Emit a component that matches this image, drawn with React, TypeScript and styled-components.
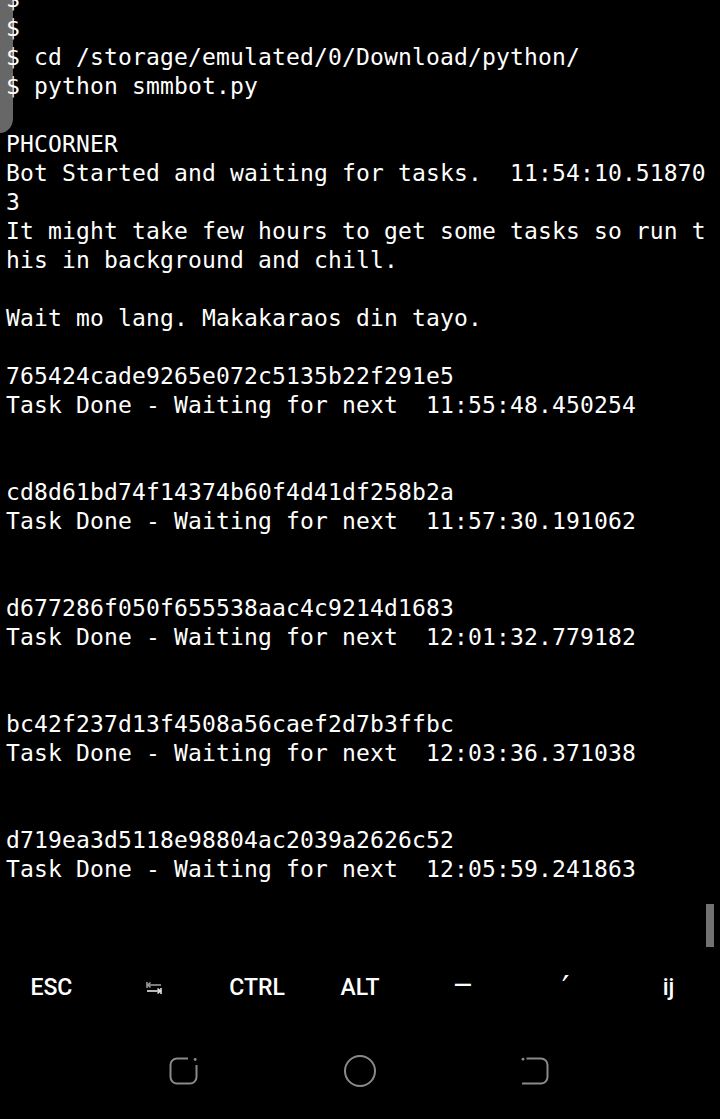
import React from "react";
import styled, { createGlobalStyle } from "styled-components";

const Global = createGlobalStyle`
  html, body { margin: 0; padding: 0; background: #000; }
  body { width: 720px; height: 1119px; overflow: hidden; }
`;

const Screen = styled.div`
  width: 720px;
  height: 1119px;
  background: #000;
  display: flex;
  flex-direction: column;
  overflow: hidden;
`;

const Terminal = styled.div`
  position: relative;
  height: 955px;
  overflow: hidden;
  flex: none;
`;

const Output = styled.pre`
  position: relative;
  margin: -15px 0 0 0;
  padding: 0 0 0 6px;
  font-family: "DejaVu Sans Mono", "Liberation Mono", monospace;
  font-size: 23px;
  line-height: 29px;
  letter-spacing: 0.15px;
  color: #ffffff;
  white-space: pre;
`;

const Line = styled.div`
  height: 29px;
`;

const DrawerHandle = styled.div`
  position: absolute;
  left: 0;
  top: 0;
  width: 13px;
  height: 133px;
  background: #676767;
  border-bottom-right-radius: 16px 18px;
`;

const ScrollThumb = styled.div`
  position: absolute;
  left: 706px;
  top: 904px;
  width: 8px;
  height: 43px;
  background: #727272;
`;

const ExtraKeys = styled.div`
  height: 64px;
  flex: none;
  display: grid;
  grid-template-columns: repeat(7, 1fr);
  align-items: center;
  justify-items: center;
`;

const Key = styled.div<{ $font?: string; $size?: number; $shift?: number; $weight?: number }>`
  font-family: ${(p) => p.$font ?? "Roboto"}, "DejaVu Sans", sans-serif;
  font-weight: ${(p) => p.$weight ?? 500};
  font-size: ${(p) => p.$size ?? 23}px;
  line-height: 1;
  color: #ffffff;
  transform: translateY(${(p) => p.$shift ?? 0}px);
`;

const NavBar = styled.div`
  flex: 1;
  display: flex;
  justify-content: center;
  align-items: center;
  padding-top: 4px;
`;

const NavSlot = styled.div`
  width: 176px;
  display: flex;
  justify-content: center;
`;

const lines = [
  "$",
  "$",
  "$ cd /storage/emulated/0/Download/python/",
  "$ python smmbot.py",
  "",
  "PHCORNER",
  "Bot Started and waiting for tasks.  11:54:10.51870",
  "3",
  "It might take few hours to get some tasks so run t",
  "his in background and chill.",
  "",
  "Wait mo lang. Makakaraos din tayo.",
  "",
  "765424cade9265e072c5135b22f291e5",
  "Task Done - Waiting for next  11:55:48.450254",
  "",
  "",
  "cd8d61bd74f14374b60f4d41df258b2a",
  "Task Done - Waiting for next  11:57:30.191062",
  "",
  "",
  "d677286f050f655538aac4c9214d1683",
  "Task Done - Waiting for next  12:01:32.779182",
  "",
  "",
  "bc42f237d13f4508a56caef2d7b3ffbc",
  "Task Done - Waiting for next  12:03:36.371038",
  "",
  "",
  "d719ea3d5118e98804ac2039a2626c52",
  "Task Done - Waiting for next  12:05:59.241863",
];

const TabIcon = () => (
  <svg width="18" height="14" viewBox="0 0 18 14">
    <g fill="none" strokeWidth="1.6">
      <line x1="2" y1="1" x2="2" y2="7" stroke="#9a9a9a" />
      <line x1="2.5" y1="4" x2="16" y2="4" stroke="#9a9a9a" />
      <polyline points="5.5,1.5 2.8,4 5.5,6.5" stroke="#9a9a9a" />
      <line x1="16" y1="7" x2="16" y2="13" stroke="#e6e6e6" />
      <line x1="2" y1="10" x2="15.5" y2="10" stroke="#e6e6e6" />
      <polyline points="12.5,7.5 15.2,10 12.5,12.5" stroke="#e6e6e6" />
    </g>
  </svg>
);

const RecentsIcon = () => (
  <svg width="32" height="30" viewBox="0 0 32 30">
    <path
      d="M20 2.5 H9 A6.5 6.5 0 0 0 2.5 9 V21 A6.5 6.5 0 0 0 9 27.5 H22 A6.5 6.5 0 0 0 28.5 21 V9"
      fill="none"
      stroke="#8a8a8a"
      strokeWidth="2"
    />
    <circle cx="27.2" cy="3.5" r="1.4" fill="#8a8a8a" />
  </svg>
);

const HomeIcon = () => (
  <svg width="34" height="34" viewBox="0 0 34 34">
    <circle cx="17" cy="17" r="15" fill="none" stroke="#8a8a8a" strokeWidth="2" />
  </svg>
);

const BackIcon = () => (
  <svg width="30" height="30" viewBox="0 0 30 30">
    <path
      d="M5.5 2.5 H20 A6.5 6.5 0 0 1 26.5 9 V21 A6.5 6.5 0 0 1 20 27.5 H1"
      fill="none"
      stroke="#8a8a8a"
      strokeWidth="2"
    />
    <circle cx="2" cy="3.2" r="1.4" fill="#8a8a8a" />
  </svg>
);

export default function App() {
  return (
    <>
      <Global />
      <Screen>
        <Terminal>
          <DrawerHandle />
          <Output>
            {lines.map((l, i) => (
              <Line key={i}>{l}</Line>
            ))}
          </Output>
          <ScrollThumb />
        </Terminal>
        <ExtraKeys>
          <Key>ESC</Key>
          <Key>
            <TabIcon />
          </Key>
          <Key>CTRL</Key>
          <Key>ALT</Key>
          <Key $size={24} $shift={-2}>—</Key>
          <Key $font="DejaVu Sans" $size={34} $weight={400} $shift={1}>′</Key>
          <Key $size={23}>ij</Key>
        </ExtraKeys>
        <NavBar>
          <NavSlot>
            <RecentsIcon />
          </NavSlot>
          <NavSlot>
            <HomeIcon />
          </NavSlot>
          <NavSlot>
            <BackIcon />
          </NavSlot>
        </NavBar>
      </Screen>
    </>
  );
}
